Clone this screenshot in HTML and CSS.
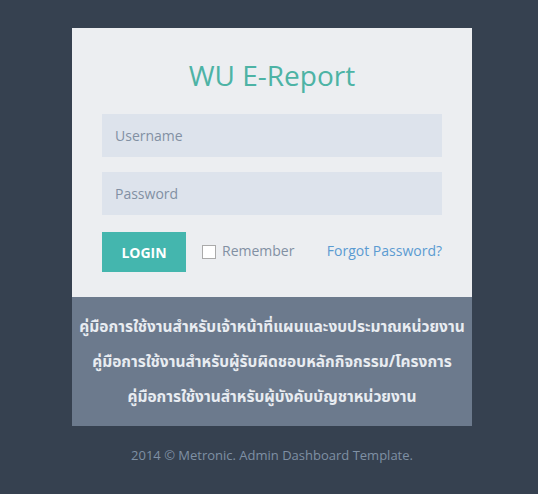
FILE: index.html
```html
<!DOCTYPE html>
<html>
<head>
<meta charset="utf-8">
<link rel="stylesheet" href="styles.css">
</head>
<body>
<div class="page">
  <div class="card">
    <div class="login">
      <h3 class="title">WU E-Report</h3>
      <div class="field"><input class="input" type="text" placeholder="Username"></div>
      <div class="field"><input class="input" type="password" placeholder="Password"></div>
      <div class="actions">
        <button class="btn">LOGIN</button>
        <label class="remember"><span class="box"></span>Remember</label>
        <a class="forgot" href="#">Forgot Password?</a>
      </div>
    </div>
    <div class="manuals">
      <a class="manual" href="#">คู่มือการใช้งานสำหรับเจ้าหน้าที่แผนและงบประมาณหน่วยงาน</a>
      <a class="manual" href="#">คู่มือการใช้งานสำหรับผู้รับผิดชอบหลักกิจกรรม/โครงการ</a>
      <a class="manual" href="#">คู่มือการใช้งานสำหรับผู้บังคับบัญชาหน่วยงาน</a>
    </div>
  </div>
  <div class="copyright">2014 © Metronic. Admin Dashboard Template.</div>
</div>
</body>
</html>
```

FILE: styles.css
```css
html, body {
  margin: 0;
  padding: 0;
  background: #364150;
  font-family: "Open Sans", "Noto Sans", sans-serif;
}
.page {
  padding: 28px 0 0 6px;
}
.card {
  width: 400px;
  margin: 0 auto;
  background: #eceef1;
}
.login {
  padding: 28px 30px 25px;
}
.title {
  margin: 0 0 20px;
  text-align: center;
  font-size: 28px;
  font-weight: 400;
  line-height: 38px;
  color: #4db3a5;
}
.field {
  margin-bottom: 15px;
}
.input {
  display: block;
  box-sizing: border-box;
  width: 100%;
  height: 43px;
  border: none;
  background: #dde3ec;
  padding: 0 13px;
  font-family: "Open Sans", sans-serif;
  font-size: 14px;
  color: #8290a3;
  outline: none;
}
.input::placeholder {
  color: #8290a3;
}
.actions {
  display: flex;
  align-items: center;
  margin-top: 17px;
}
.btn {
  width: 84px;
  height: 40px;
  border: none;
  background: #44b6ae;
  color: #fff;
  font-family: "Open Sans", sans-serif;
  font-weight: 700;
  font-size: 14px;
  padding: 0;
}
.remember {
  display: flex;
  align-items: center;
  margin-left: 16px;
  margin-top: -3px;
  font-size: 14px;
  color: #8290a3;
}
.box {
  width: 12px;
  height: 12px;
  border: 1px solid #aaa;
  background: #fff;
  margin-right: 6px;
  margin-top: 2px;
}
.forgot {
  margin-left: auto;
  margin-top: -3px;
  font-size: 14px;
  color: #5b9bd1;
  text-decoration: none;
}
.manuals {
  background: #6c7a8d;
  padding: 12px 0 12px;
  display: flex;
  flex-direction: column;
  align-items: center;
}
.manual {
  display: block;
  height: 35px;
  font-family: "Noto Sans", "Noto Sans Thai", "DejaVu Sans", sans-serif;
  font-weight: 700;
  font-size: 15.5px;
  line-height: 35px;
  color: #e8ecf1;
  text-decoration: none;
  white-space: nowrap;
}
.copyright {
  margin-top: 20px;
  text-align: center;
  font-size: 13px;
  color: #7f90a4;
}
```
